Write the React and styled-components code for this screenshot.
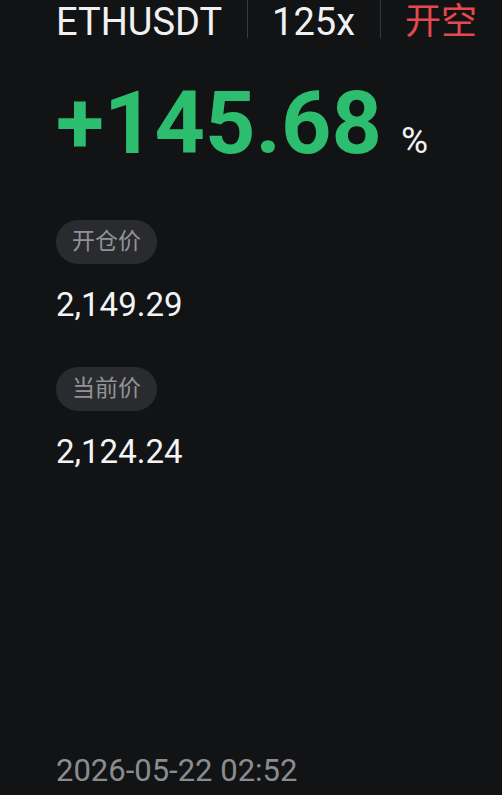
import React from "react";
import styled, {createGlobalStyle} from "styled-components";

const GlobalStyle = createGlobalStyle`
  html, body {
    margin: 0;
    padding: 0;
    background-color: #121315;
  }
  body {
    font-family: Roboto, "Noto Sans CJK SC", sans-serif;
  }
`
const Page = styled.div`
  display: flex;
  flex-direction: column;
  box-sizing: border-box;
  height: 795px;
  padding: 2px 0 4px 56px;
  overflow: hidden;

  background-color: #121315;
  color: #f1f1f2;
`
const Header = styled.div`
  display: flex;
  align-items: center;
  height: 40px;
  white-space: nowrap;
`
const HeaderItem = styled.span`
  flex-shrink: 0;
  font-size: ${props => props.red ? "36px" : "38px"};
  line-height: 40px;
  color: ${props => props.red ? "#e5484f" : "#f1f1f2"};
`
const Divider = styled.span`
  flex-shrink: 0;
  align-self: flex-start;
  width: 1px;
  height: 38px;
  margin: -2px 24px 0 25px;
  background-color: #38393c;
`
const ProfitRow = styled.div`
  display: flex;
  align-items: baseline;
  height: 100px;
  margin-top: 31px;
  line-height: 100px;
`
const Profit = styled.span`
  font-size: 88px;
  font-weight: 700;
  color: #2dbd6f;
`
const Percent = styled.span`
  margin-left: 19px;
  font-size: 37px;
  color: #f1f1f2;
`
const Field = styled.div`
  display: flex;
  flex-direction: column;
  align-items: flex-start;
  margin-top: ${props => props.first ? "47px" : "42px"};
`
const Pill = styled.span`
  height: 44px;
  padding: 0 16px;
  border-radius: 22px;

  font-size: 23px;
  line-height: 44px;
  color: #929397;
  background-color: #2a2b2e;
`
const Value = styled.div`
  margin-top: 21px;
  font-size: 33px;
  line-height: 40px;
  color: #f4f4f5;
`
const DateLine = styled.div`
  margin-top: auto;
  font-size: 31px;
  line-height: 40px;
  color: #8b8c90;
`

const App = () => {
    const fields = [
        {label: "开仓价", value: "2,149.29"},
        {label: "当前价", value: "2,124.24"},
    ]
    return (
        <>
            <GlobalStyle/>
            <Page>
                <Header>
                    <HeaderItem>ETHUSDT</HeaderItem>
                    <Divider/>
                    <HeaderItem>125x</HeaderItem>
                    <Divider/>
                    <HeaderItem red>开空</HeaderItem>
                </Header>
                <ProfitRow>
                    <Profit>+145.68</Profit>
                    <Percent>%</Percent>
                </ProfitRow>
                {fields.map((f, i) => (
                    <Field key={f.label} first={i === 0}>
                        <Pill>{f.label}</Pill>
                        <Value>{f.value}</Value>
                    </Field>
                ))}
                <DateLine>2026-05-22 02:52</DateLine>
            </Page>
        </>
    )
}
export default App;
